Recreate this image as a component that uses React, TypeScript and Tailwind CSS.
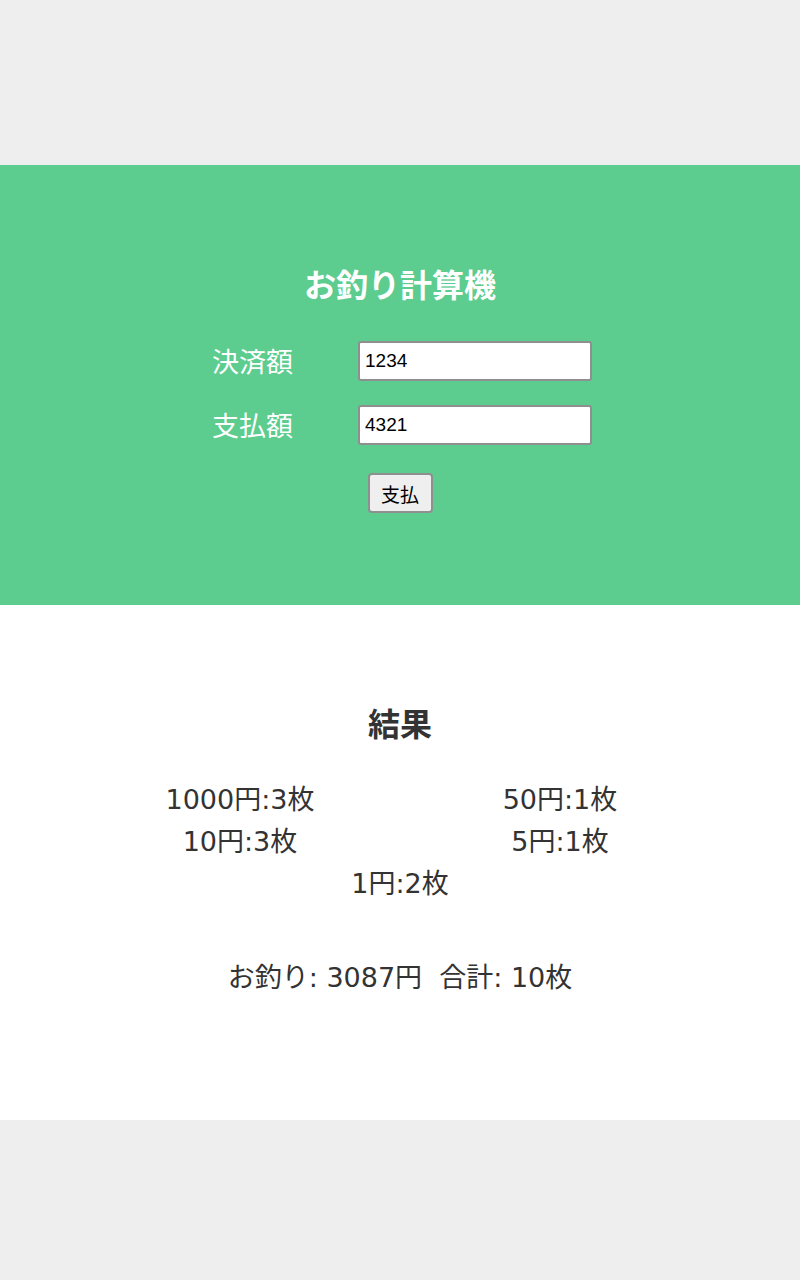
import React from "react";

const jp = "font-['DejaVu_Sans','Noto_Sans_CJK_JP',sans-serif]";

export default function App() {
  const coins = [
    "1000円:3枚",
    "50円:1枚",
    "10円:3枚",
    "5円:1枚",
    "1円:2枚",
  ];
  return (
    <div className={`min-h-[1280px] w-[800px] bg-[#eeeeee] ${jp}`}>
      <div className="h-[165px]" />
      <div className="flex h-[440px] flex-col items-center bg-[#5ccc8f] pt-[98px]">
        <h1 className="font-['Noto_Sans_CJK_JP',sans-serif] text-[32px] font-bold leading-[40px] text-white">
          お釣り計算機
        </h1>
        <div className="mt-[38px] ml-[4px] flex flex-col gap-[24px]">
          <div className="flex items-center">
            <label className="w-[146px] font-['Noto_Sans_CJK_JP',sans-serif] text-[27px] leading-[40px] text-white">
              決済額
            </label>
            <input
              defaultValue="1234"
              className="h-[40px] w-[234px] rounded-[3px] border-2 border-[#8f8f8f] bg-white px-[5px] font-['Liberation_Sans',sans-serif] text-[19px] text-black outline-none"
            />
          </div>
          <div className="flex items-center">
            <label className="w-[146px] font-['Noto_Sans_CJK_JP',sans-serif] text-[27px] leading-[40px] text-white">
              支払額
            </label>
            <input
              defaultValue="4321"
              className="h-[40px] w-[234px] rounded-[3px] border-2 border-[#8f8f8f] bg-white px-[5px] font-['Liberation_Sans',sans-serif] text-[19px] text-black outline-none"
            />
          </div>
        </div>
        <button className="mt-[28px] h-[40px] w-[65px] rounded-[4px] border-2 border-[#8f8f8f] bg-[#efefef] font-['Noto_Sans_CJK_JP',sans-serif] text-[19px] leading-none text-black">
          支払
        </button>
      </div>
      <div className="flex h-[515px] flex-col items-center bg-white pt-[97px] text-[#333333]">
        <h2 className="font-['Noto_Sans_CJK_JP',sans-serif] text-[32px] font-bold leading-[40px]">結果</h2>
        <div className="mt-[37px] flex w-[640px] flex-wrap justify-center">
          {coins.map((c) => (
            <div key={c} className="w-1/2 text-center text-[27px] leading-[42px]">
              {c}
            </div>
          ))}
        </div>
        <div className="mt-[52px] whitespace-pre text-[27px] leading-[42px]">
          {"お釣り: 3087円  合計: 10枚"}
        </div>
      </div>
    </div>
  );
}
